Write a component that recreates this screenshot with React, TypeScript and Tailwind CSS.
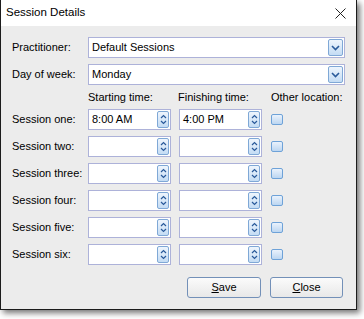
import React from 'react';

const font = { fontFamily: '"Liberation Sans", Arial, sans-serif' };

function SpinIcon() {
  return (
    <svg width="7" height="11" viewBox="0 0 7 11" fill="none" stroke="#2a5a9a" strokeWidth="1.2">
      <path d="M1 4 L3.5 1.5 L6 4" />
      <path d="M1 7 L3.5 9.5 L6 7" />
    </svg>
  );
}

function DropIcon() {
  return (
    <svg width="9" height="6" viewBox="0 0 9 6" fill="none" stroke="#2a5a9a" strokeWidth="1.6">
      <path d="M1 1 L4.5 4.5 L8 1" />
    </svg>
  );
}

function Combo({ value }: { value: string }) {
  return (
    <div className="flex h-[21px] flex-1 items-stretch border border-[#adb2d9] bg-white p-[1px]">
      <span className="flex flex-1 items-center pl-[2px] text-[11px] text-black">{value}</span>
      <span className="flex w-[15px] items-center justify-center rounded-[2px] border border-[#7fa8d6] bg-gradient-to-b from-[#eef5fd] to-[#c4dcf4]">
        <DropIcon />
      </span>
    </div>
  );
}

function TimeBox({ value }: { value?: string }) {
  return (
    <div className="flex h-[21px] w-[83px] items-stretch border border-[#adb2d9] bg-white p-[1px]">
      <span className="flex flex-1 items-center pl-[2px] text-[11px] text-black">{value}</span>
      <span className="flex w-[12px] items-center justify-center rounded-[2px] border border-[#7fa8d6] bg-gradient-to-b from-[#eef5fd] to-[#c4dcf4]">
        <SpinIcon />
      </span>
    </div>
  );
}

function Check() {
  return (
    <span className="block h-[11px] w-[12px] rounded-[2px] border border-[#6ea2d8] bg-gradient-to-b from-[#eaf2fc] to-[#bcd6f1]" />
  );
}

const sessions = [
  { label: 'Session one:', start: '8:00 AM', end: '4:00 PM' },
  { label: 'Session two:' },
  { label: 'Session three:' },
  { label: 'Session four:' },
  { label: 'Session five:' },
  { label: 'Session six:' },
] as { label: string; start?: string; end?: string }[];

export default function App() {
  return (
    <div className="h-[319px] w-[364px] bg-white" style={font}>
      <div className="flex h-[310px] w-[357px] flex-col border border-t-0 border-[#1c1c1c] bg-[#ececec] shadow-[3px_3px_6px_rgba(0,0,0,0.55)]">
        <div className="flex h-[26px] items-center justify-between bg-white pl-[5px] pr-[10px]">
          <span className="text-[11.5px] text-black">Session Details</span>
          <svg width="11" height="11" viewBox="0 0 11 11" stroke="#222" strokeWidth="1">
            <path d="M0.5 0.5 L10.5 10.5 M10.5 0.5 L0.5 10.5" />
          </svg>
        </div>

        <div className="flex flex-1 flex-col gap-[6px] pl-[11px] pr-[11px] pt-[11px] text-[11px] text-black">
          <div className="flex items-center">
            <span className="w-[76px]">Practitioner:</span>
            <Combo value="Default Sessions" />
          </div>
          <div className="flex items-center">
            <span className="w-[76px]">Day of week:</span>
            <Combo value="Monday" />
          </div>
          <div className="flex h-[12px] items-center">
            <span className="w-[76px]" />
            <span className="w-[90px]">Starting time:</span>
            <span className="w-[93px]">Finishing time:</span>
            <span>Other location:</span>
          </div>
          {sessions.map((s) => (
            <div key={s.label} className="flex items-center">
              <span className="w-[76px]">{s.label}</span>
              <TimeBox value={s.start} />
              <span className="w-[8px]" />
              <TimeBox value={s.end} />
              <span className="w-[9px]" />
              <Check />
            </div>
          ))}

          <div className="mt-[6px] flex justify-end gap-[9px] pr-[2px]">
            <button className="h-[21px] w-[74px] rounded-[3px] border border-[#7390b8] bg-gradient-to-b from-[#fbfbfb] to-[#e8e8e8] text-[11px] text-black">
              <span className="underline">S</span>ave
            </button>
            <button className="h-[21px] w-[73px] rounded-[3px] border border-[#7390b8] bg-gradient-to-b from-[#fbfbfb] to-[#e8e8e8] text-[11px] text-black">
              <span className="underline">C</span>lose
            </button>
          </div>
        </div>
      </div>
    </div>
  );
}
